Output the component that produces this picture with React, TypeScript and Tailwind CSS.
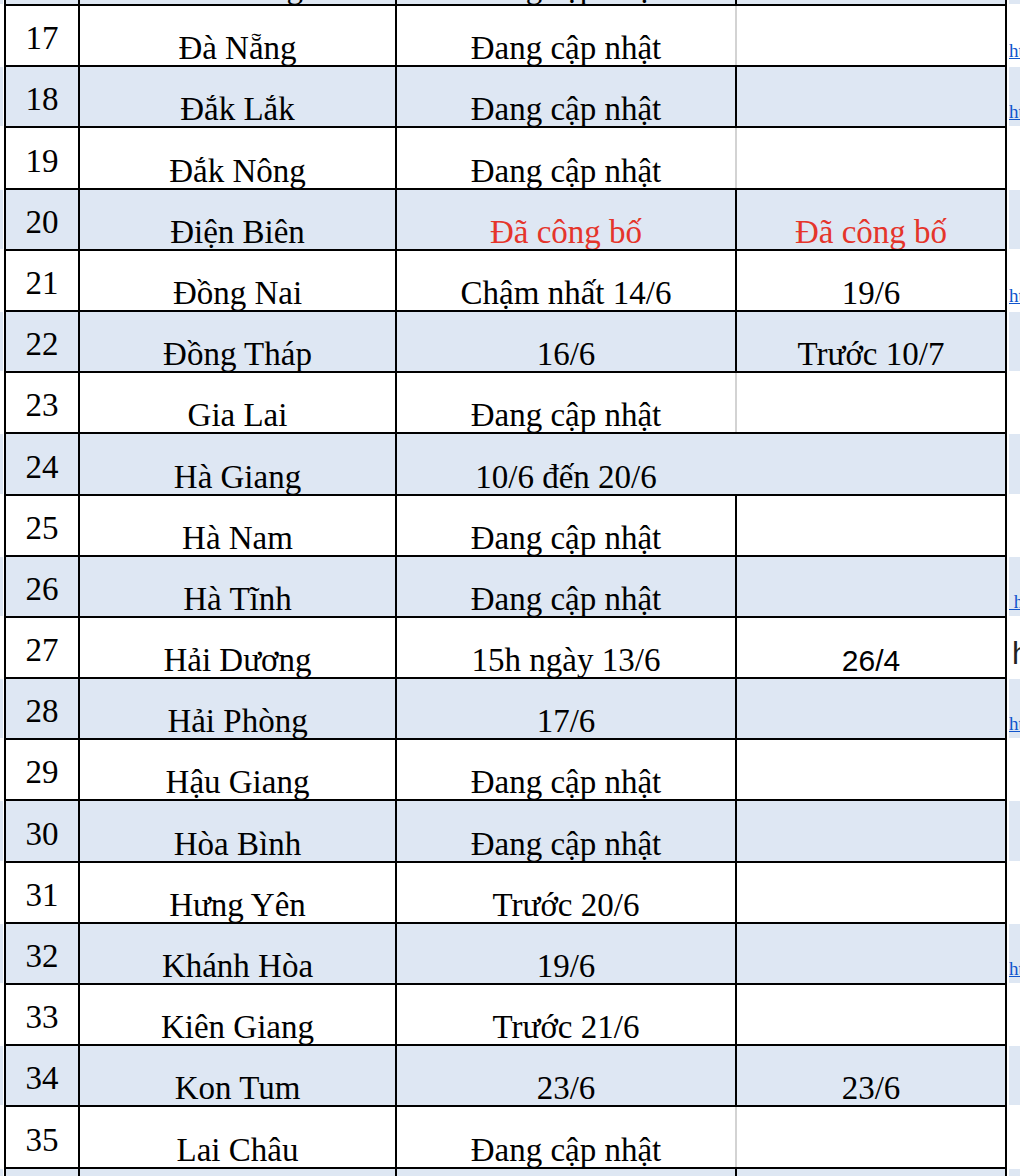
type Row = {
  n: number;
  name: string;
  c3: string;
  c4?: string;
  red?: boolean;
  sans4?: boolean;
  sep: "black" | "gray" | "none";
  link?: string;
  extra?: string;
};

const rows: Row[] = [
  { n: 16, name: "Cao Bằng", c3: "Đang cập nhật", sep: "black" },
  { n: 17, name: "Đà Nẵng", c3: "Đang cập nhật", sep: "gray", link: "https://" },
  { n: 18, name: "Đắk Lắk", c3: "Đang cập nhật", sep: "black", link: "https://" },
  { n: 19, name: "Đắk Nông", c3: "Đang cập nhật", sep: "gray" },
  { n: 20, name: "Điện Biên", c3: "Đã công bố", c4: "Đã công bố", red: true, sep: "black" },
  { n: 21, name: "Đồng Nai", c3: "Chậm nhất 14/6", c4: "19/6", sep: "black", link: "https://" },
  { n: 22, name: "Đồng Tháp", c3: "16/6", c4: "Trước 10/7", sep: "black" },
  { n: 23, name: "Gia Lai", c3: "Đang cập nhật", sep: "gray" },
  { n: 24, name: "Hà Giang", c3: "10/6 đến 20/6", sep: "none" },
  { n: 25, name: "Hà Nam", c3: "Đang cập nhật", sep: "black" },
  { n: 26, name: "Hà Tĩnh", c3: "Đang cập nhật", sep: "black", link: "\u00a0https://" },
  { n: 27, name: "Hải Dương", c3: "15h ngày 13/6", c4: "26/4", sans4: true, sep: "black", extra: "https://" },
  { n: 28, name: "Hải Phòng", c3: "17/6", sep: "black", link: "https://" },
  { n: 29, name: "Hậu Giang", c3: "Đang cập nhật", sep: "black" },
  { n: 30, name: "Hòa Bình", c3: "Đang cập nhật", sep: "black" },
  { n: 31, name: "Hưng Yên", c3: "Trước 20/6", sep: "black" },
  { n: 32, name: "Khánh Hòa", c3: "19/6", sep: "black", link: "https://" },
  { n: 33, name: "Kiên Giang", c3: "Trước 21/6", sep: "black" },
  { n: 34, name: "Kon Tum", c3: "23/6", c4: "23/6", sep: "black" },
  { n: 35, name: "Lai Châu", c3: "Đang cập nhật", sep: "gray" },
  { n: 36, name: "Lâm Đồng", c3: "Đang cập nhật", sep: "black" },
];

const sepClass = {
  black: "border-black",
  gray: "border-[#d3d3d3]",
  none: "border-transparent",
};

function SheetRow({ row }: { row: Row }) {
  const shaded = row.n % 2 === 0;
  const bg = shaded ? "bg-[#dee7f3]" : "bg-white";
  const textColor = row.red ? "text-[#e5352b]" : "text-black";

  return (
    <div className="flex h-[61.2px] shrink-0">
      <div className="w-[4px] pt-[2px]">
        <div className={`h-full w-[3px] ${bg}`} />
      </div>

      <div className={`flex w-[1003px] border-x-2 border-t-2 border-black ${bg}`}>
        <div className="flex w-[72px] items-end justify-center pb-[10px]">
          {row.n}
        </div>
        <div className="flex w-[317px] items-end justify-center border-l-2 border-black">
          {row.name}
        </div>
        <div className={`flex w-[340px] items-end justify-center border-l-2 border-black ${textColor}`}>
          {row.c3}
        </div>
        <div
          className={`flex w-[270px] items-end justify-center border-l-2 ${sepClass[row.sep]} ${textColor} ${
            row.sans4 ? "font-['Liberation_Sans',sans-serif] text-[30px] leading-[30px] pb-[1px]" : ""
          }`}
        >
          {row.c4}
        </div>
      </div>

      <div className="min-w-0 flex-1 pl-[2px] pt-[2px]">
        <div className={`flex h-full items-end overflow-hidden whitespace-nowrap ${bg}`}>
          {row.link && (
            <a href="#" className="pb-[5px] text-[19px] leading-[19px] text-[#1155cc] underline">
              {row.link}
            </a>
          )}
          {row.extra && (
            <span className="pb-[8px] pl-[3px] font-['Liberation_Sans',sans-serif] text-[31px] leading-[31px] text-[#222]">
              {row.extra}
            </span>
          )}
        </div>
      </div>
    </div>
  );
}

export default function App() {
  return (
    <div className="h-[1176px] w-[1020px] overflow-hidden bg-white font-['Liberation_Serif',serif] text-[33px] leading-[33px] text-black">
      <div className="-mt-[57.2px] flex flex-col">
        {rows.map((row) => (
          <SheetRow key={row.n} row={row} />
        ))}
      </div>
    </div>
  );
}
